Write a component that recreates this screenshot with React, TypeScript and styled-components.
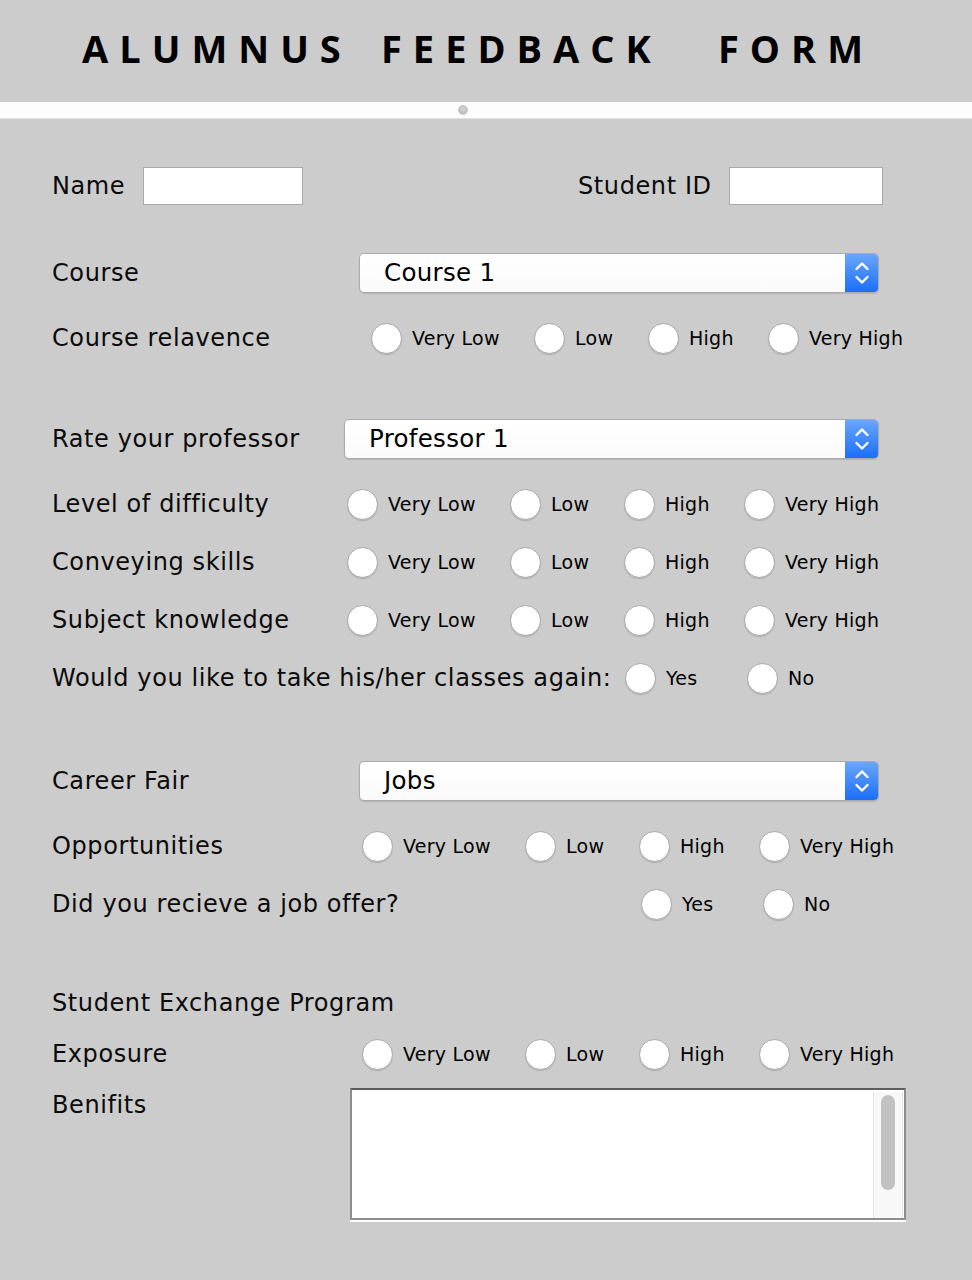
import styled, { createGlobalStyle } from 'styled-components';

const GlobalStyle = createGlobalStyle`
  html, body {
    margin: 0;
    padding: 0;
    background: #cccccc;
  }
  body {
    font-family: 'DejaVu Sans', 'Liberation Sans', sans-serif;
    color: #000;
  }
`;

const Page = styled.div`
  width: 972px;
  min-height: 1280px;
  background: #cccccc;
`;

const Header = styled.header`
  height: 102px;
  display: flex;
  align-items: center;
  padding-left: 82px;
  box-sizing: border-box;
`;

const Word = styled.span<{ $w?: number }>`
  display: inline-block;
  width: ${(p) => (p.$w ? `${p.$w}px` : 'auto')};
  font-family: 'Open Sans', 'DejaVu Sans', sans-serif;
  font-weight: 700;
  font-size: 38px;
  letter-spacing: 11px;
  line-height: 1;
  padding-bottom: 6px;
`;

const Divider = styled.div`
  height: 17px;
  background: #fdfdfd;
  border-bottom: 1px solid #e2e2e2;
  display: flex;
  justify-content: center;
  align-items: center;
  box-sizing: border-box;
`;

const Knob = styled.span`
  width: 10px;
  height: 10px;
  margin-left: -46px;
  border-radius: 50%;
  background: radial-gradient(circle at 50% 40%, #d6d6d6, #b4b4b4);
  border: 1px solid #c4c4c4;
  box-sizing: border-box;
`;

const Form = styled.div`
  padding: 47px 0 0 52px;
  display: flex;
  flex-direction: column;
`;

const Row = styled.div<{ $at?: number; $top?: number }>`
  display: grid;
  grid-template-columns: ${(p) => (p.$at ? `${p.$at - 52}px auto` : 'auto')};
  align-items: center;
  height: 40px;
  margin-top: ${(p) => p.$top ?? 0}px;
`;

const IdRow = styled.div`
  display: grid;
  grid-template-columns: 91px 160px 275px 151px 154px;
  align-items: center;
  height: 40px;
`;

const TopRow = styled.div<{ $at: number; $top: number }>`
  display: grid;
  grid-template-columns: ${(p) => p.$at - 52}px auto;
  align-items: start;
  margin-top: ${(p) => p.$top}px;
`;

const Label = styled.span`
  font-size: 24px;
  letter-spacing: 0.6px;
  white-space: nowrap;
  line-height: 34px;
  color: #0a0a0a;
`;

const TextInput = styled.div<{ $w: number }>`
  width: ${(p) => p.$w}px;
  height: 38px;
  background: #fff;
  border: 1px solid #a9a9a9;
  box-sizing: border-box;
`;

const Combo = styled.div<{ $w: number }>`
  width: ${(p) => p.$w}px;
  height: 40px;
  display: flex;
  align-items: stretch;
  background: linear-gradient(#ffffff, #fafafa);
  border: 1px solid #ababab;
  border-radius: 5px;
  box-shadow: 0 1px 1px rgba(0, 0, 0, 0.12);
  box-sizing: border-box;
  overflow: hidden;
`;

const ComboText = styled.span`
  flex: 1;
  padding-left: 24px;
  font-size: 24.5px;
  letter-spacing: 0.3px;
  line-height: 38px;
`;

const Stepper = styled.span`
  width: 33px;
  display: flex;
  align-items: center;
  justify-content: center;
  background: linear-gradient(#6aa6fb, #1a6ff9);
`;

const Group = styled.div`
  display: flex;
  align-items: center;
`;

const Option = styled.label<{ $w?: number }>`
  display: flex;
  align-items: center;
  gap: 10px;
  width: ${(p) => (p.$w ? `${p.$w}px` : 'auto')};
  font-size: 19px;
  letter-spacing: 0.25px;
  white-space: nowrap;
`;

const Circle = styled.span`
  width: 31px;
  height: 31px;
  border-radius: 50%;
  background: radial-gradient(circle at 50% 45%, #ffffff 60%, #f0f0f0 100%);
  border: 1px solid #acacac;
  box-shadow: 0 1px 1px rgba(0, 0, 0, 0.15);
  box-sizing: border-box;
  flex: none;
`;

const TextArea = styled.div`
  width: 556px;
  height: 132px;
  display: flex;
  justify-content: flex-end;
  background: #fff;
  border: 2px solid #8e8e8e;
  border-top-color: #5e5e5e;
  box-shadow: 0 2px 0 #ffffff;
  box-sizing: border-box;
`;

const Track = styled.div`
  width: 30px;
  margin: 2px 1px 0 0;
  background: #f8f8f8;
  border-left: 1px solid #e6e6e6;
  border-right: 1px solid #e6e6e6;
  box-sizing: border-box;
  display: flex;
  justify-content: center;
  padding-top: 3px;
`;

const Thumb = styled.div`
  width: 14px;
  height: 95px;
  border-radius: 7px;
  background: #c1c1c1;
`;

const levels = ['Very Low', 'Low', 'High', 'Very High'];
const levelWidths = [163, 114, 120];
const yesNo = ['Yes', 'No'];

function Radios({ items, widths }: { items: string[]; widths: number[] }) {
  return (
    <Group>
      {items.map((item, i) => (
        <Option key={item} $w={widths[i]}>
          <Circle />
          {item}
        </Option>
      ))}
    </Group>
  );
}

function Select({ value, width }: { value: string; width: number }) {
  return (
    <Combo $w={width}>
      <ComboText>{value}</ComboText>
      <Stepper>
        <svg width="16" height="26" viewBox="0 0 16 26" fill="none">
          <path d="M2.5 9 L8 3.5 L13.5 9" stroke="#fff" strokeWidth="2.4" strokeLinecap="round" strokeLinejoin="round" />
          <path d="M2.5 17 L8 22.5 L13.5 17" stroke="#fff" strokeWidth="2.4" strokeLinecap="round" strokeLinejoin="round" />
        </svg>
      </Stepper>
    </Combo>
  );
}

export default function App() {
  return (
    <Page>
      <GlobalStyle />
      <Header>
        <Word $w={299}>ALUMNUS</Word>
        <Word $w={337}>FEEDBACK</Word>
        <Word>FORM</Word>
      </Header>
      <Divider>
        <Knob />
      </Divider>
      <Form>
        <IdRow>
          <Label>Name</Label>
          <TextInput $w={160} />
          <span />
          <Label>Student ID</Label>
          <TextInput $w={154} />
        </IdRow>

        <Row $at={359} $top={47}>
          <Label>Course</Label>
          <Select value="Course 1" width={520} />
        </Row>
        <Row $at={371} $top={25}>
          <Label>Course relavence</Label>
          <Radios items={levels} widths={levelWidths} />
        </Row>

        <Row $at={344} $top={61}>
          <Label>Rate your professor</Label>
          <Select value="Professor 1" width={535} />
        </Row>
        <Row $at={347} $top={25}>
          <Label>Level of difficulty</Label>
          <Radios items={levels} widths={levelWidths} />
        </Row>
        <Row $at={347} $top={18}>
          <Label>Conveying skills</Label>
          <Radios items={levels} widths={levelWidths} />
        </Row>
        <Row $at={347} $top={18}>
          <Label>Subject knowledge</Label>
          <Radios items={levels} widths={levelWidths} />
        </Row>
        <Row $at={625} $top={18}>
          <Label>Would you like to take his/her classes again:</Label>
          <Radios items={yesNo} widths={[122]} />
        </Row>

        <Row $at={359} $top={63}>
          <Label>Career Fair</Label>
          <Select value="Jobs" width={520} />
        </Row>
        <Row $at={362} $top={25}>
          <Label>Opportunities</Label>
          <Radios items={levels} widths={levelWidths} />
        </Row>
        <Row $at={641} $top={18}>
          <Label>Did you recieve a job offer?</Label>
          <Radios items={yesNo} widths={[122]} />
        </Row>

        <Row $top={59}>
          <Label>Student Exchange Program</Label>
        </Row>
        <Row $at={362} $top={11}>
          <Label>Exposure</Label>
          <Radios items={levels} widths={levelWidths} />
        </Row>
        <TopRow $at={350} $top={14}>
          <Label>Benifits</Label>
          <TextArea>
            <Track>
              <Thumb />
            </Track>
          </TextArea>
        </TopRow>
      </Form>
    </Page>
  );
}
